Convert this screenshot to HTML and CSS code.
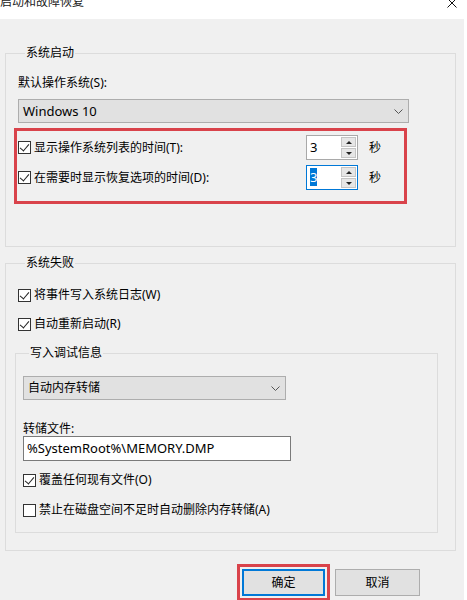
FILE: index.html
```html
<!DOCTYPE html>
<html lang="zh-CN">
<head>
    <meta charset="UTF-8">
    <title>启动和故障恢复</title>
    <link rel="stylesheet" href="styles.css">
</head>
<body>
    <div class="dialog">
        <div class="titlebar">
            <span class="title">启动和故障恢复</span>
            <svg class="close" width="10" height="10" viewBox="0 0 10 10"><path d="M0.5 0.5L9.5 9.5M9.5 0.5L0.5 9.5" stroke="#111" stroke-width="1" fill="none"/></svg>
        </div>
        <div class="content">
            <fieldset class="group startup">
                <legend>系统启动</legend>
                <div class="label">默认操作系统(S):</div>
                <div class="select os">
                    <span>Windows 10</span>
                    <svg width="9" height="5" viewBox="0 0 9 5"><path d="M0.5 0.5L4.5 4.5L8.5 0.5" stroke="#555" fill="none"/></svg>
                </div>
                <div class="highlight">
                    <div class="timer-row">
                        <label class="check"><span class="box on"></span>显示操作系统列表的时间(T):</label>
                        <div class="spin">
                            <span class="spin-val">3</span>
                            <span class="spin-btns"><i class="up"></i><i class="down"></i></span>
                        </div>
                        <span class="unit">秒</span>
                    </div>
                    <div class="timer-row">
                        <label class="check"><span class="box on"></span>在需要时显示恢复选项的时间(D):</label>
                        <div class="spin focus">
                            <span class="spin-val"><em>3</em></span>
                            <span class="spin-btns"><i class="up"></i><i class="down"></i></span>
                        </div>
                        <span class="unit">秒</span>
                    </div>
                </div>
            </fieldset>

            <fieldset class="group failure">
                <legend>系统失败</legend>
                <label class="check"><span class="box on"></span>将事件写入系统日志(W)</label>
                <label class="check row-second"><span class="box on"></span>自动重新启动(R)</label>
                <fieldset class="group debug">
                    <legend>写入调试信息</legend>
                    <div class="select dump">
                        <span>自动内存转储</span>
                        <svg width="9" height="5" viewBox="0 0 9 5"><path d="M0.5 0.5L4.5 4.5L8.5 0.5" stroke="#555" fill="none"/></svg>
                    </div>
                    <div class="label file-label">转储文件:</div>
                    <div class="textbox">%SystemRoot%\MEMORY.DMP</div>
                    <label class="check overwrite"><span class="box on"></span>覆盖任何现有文件(O)</label>
                    <label class="check nodelete"><span class="box"></span>禁止在磁盘空间不足时自动删除内存转储(A)</label>
                </fieldset>
            </fieldset>

            <div class="buttons">
                <div class="ok-mark"><button class="btn ok">确定</button></div>
                <button class="btn">取消</button>
            </div>
        </div>
    </div>
</body>
</html>
```

FILE: styles.css
```css
*{
    margin: 0;
    padding: 0;
    box-sizing: border-box;
}
body{
    font-family: "Noto Sans", "Noto Sans CJK SC", sans-serif;
    font-size: 12px;
    line-height: 16px;
    color: #000;
    background: #fff;
    overflow: hidden;
}
.dialog{
    width: 467px;
    height: 600px;
}
.titlebar{
    height: 19px;
    background: #fff;
    display: flex;
    justify-content: space-between;
    overflow: hidden;
}
.title{
    margin-top: -6px;
    color: #222;
}
.close{
    margin: -2px 10px 0 0;
    width: 10px;
    height: 10px;
}
.content{
    width: 464px;
    height: 581px;
    background: #f0f0f0;
    padding-top: 26px;
    overflow: hidden;
}
.group{
    border: 1px solid #dcdcdc;
    margin-left: 5px;
    width: 451px;
}
.group legend{
    margin-left: 7px;
    padding: 0 1px;
    line-height: 16px;
}
.startup{
    padding: 14px 0 42px 12px;
}
.label{
    line-height: 16px;
}
.select{
    background: #e1e1e1;
    border: 1px solid #adadad;
    height: 24px;
    display: flex;
    align-items: center;
    justify-content: space-between;
    padding: 0 4px 0 4px;
}
.select svg{
    margin-right: 1px;
}
.os{
    width: 391px;
    margin-top: 8px;
    font-size: 13px;
}
.highlight{
    margin: 5px 0 0 -4px;
    width: 393px;
    border: 3px solid #d9434b;
    padding: 4px 0 11px 1px;
}
.timer-row{
    display: flex;
    align-items: center;
    height: 25px;
}
.timer-row + .timer-row{
    margin-top: 5px;
}
.timer-row .check{
    width: 288px;
}
.check{
    display: flex;
    align-items: center;
    height: 16px;
    white-space: nowrap;
}
.box{
    width: 13px;
    height: 13px;
    border: 1px solid #333;
    background: #fff;
    margin-right: 3px;
    flex: none;
    position: relative;
}
.box.on::after{
    content: "";
    position: absolute;
    left: 3px;
    top: 0px;
    width: 4px;
    height: 8px;
    border: solid #222;
    border-width: 0 1px 1px 0;
    transform: rotate(40deg);
}
.spin{
    width: 52px;
    height: 25px;
    border: 1px solid #a9a9a9;
    display: flex;
    background: #fff;
}
.spin.focus{
    border-color: #0078d7;
}
.spin-val{
    flex: 1;
    padding: 3px 0 0 3px;
    font-size: 13px;
}
.spin-val em{
    font-style: normal;
    background: #0078d7;
    color: #fff;
}
.spin-btns{
    width: 16px;
    display: flex;
    flex-direction: column;
    gap: 1px;
    padding: 1px 1px 1px 0;
}
.spin-btns i{
    flex: 1;
    background: #e6e6e6;
    border: 1px solid #c4c4c4;
    display: flex;
    align-items: center;
    justify-content: center;
}
.spin-btns .up::before{
    content: "";
    border: 3px solid transparent;
    border-bottom: 3px solid #222;
    border-top: 0;
}
.spin-btns .down::before{
    content: "";
    border: 3px solid transparent;
    border-top: 3px solid #222;
    border-bottom: 0;
}
.unit{
    margin-left: 11px;
}
.failure{
    margin-top: 8px;
    padding: 16px 0 17px 12px;
}
.row-second{
    margin-top: 13px;
}
.debug{
    margin: 13px 0 0 -3px;
    width: 423px;
    padding: 15px 0 14px 7px;
}
.debug legend{
    margin-left: 6px;
}
.dump{
    width: 263px;
}
.file-label{
    margin-top: 22px;
    line-height: 14px;
}
.textbox{
    width: 268px;
    height: 25px;
    border: 1px solid #7a7a7a;
    background: #fff;
    padding: 3px 0 0 3px;
    font-size: 13px;
}
.overwrite{
    margin-top: 11px;
}
.nodelete{
    margin-top: 14px;
}
.buttons{
    display: flex;
    align-items: flex-start;
    margin: 13px 0 0 237px;
    gap: 5px;
}
.ok-mark{
    border: 3px solid #d9434b;
    padding: 2px;
}
.btn{
    font: inherit;
    width: 85px;
    height: 27px;
    background: #e1e1e1;
    border: 1px solid #adadad;
    margin-top: 5px;
}
.ok-mark .btn{
    width: 83px;
    border: 2px solid #0078d7;
    margin-top: 0;
}
```
